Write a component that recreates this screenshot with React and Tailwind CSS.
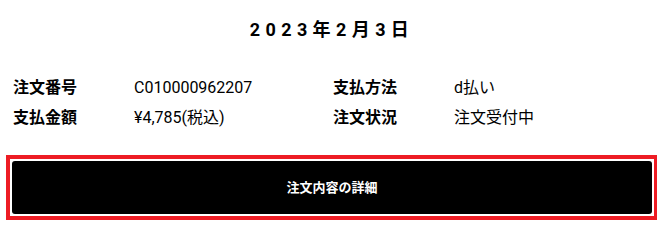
import React from "react";

const rows = [
  [
    { label: "注文番号", value: "C010000962207" },
    { label: "支払方法", value: "d払い" },
  ],
  [
    { label: "支払金額", value: "¥4,785(税込)" },
    { label: "注文状況", value: "注文受付中" },
  ],
];

export default function App() {
  return (
    <div className="w-[657px] h-[221px] overflow-hidden bg-white text-black font-['Roboto','Noto_Sans_CJK_JP',sans-serif]">
      <div className="ml-3 w-[640px]">
        <h2 className="mt-[18px] h-6 text-center text-[18px] leading-6 font-bold tracking-[0.3em]">
          2023年2月3日
        </h2>

        <div className="mt-[31px]">
          {rows.map((row, i) => (
            <div key={i} className="grid grid-cols-2 h-[30px] items-center">
              {row.map((cell) => (
                <div key={cell.label} className="flex items-center text-[16px] leading-6">
                  <span className="w-[122px] shrink-0 font-bold pl-px">{cell.label}</span>
                  <span>{cell.value}</span>
                </div>
              ))}
            </div>
          ))}
        </div>

        <div className="-ml-[6px] mt-[22px] w-[652px] border-4 border-[#ed1c24] p-[2px]">
          <button className="flex h-[53px] w-full items-center justify-center rounded-[3px] bg-black text-[13px] font-bold text-white">
            注文内容の詳細
          </button>
        </div>
      </div>
    </div>
  );
}
